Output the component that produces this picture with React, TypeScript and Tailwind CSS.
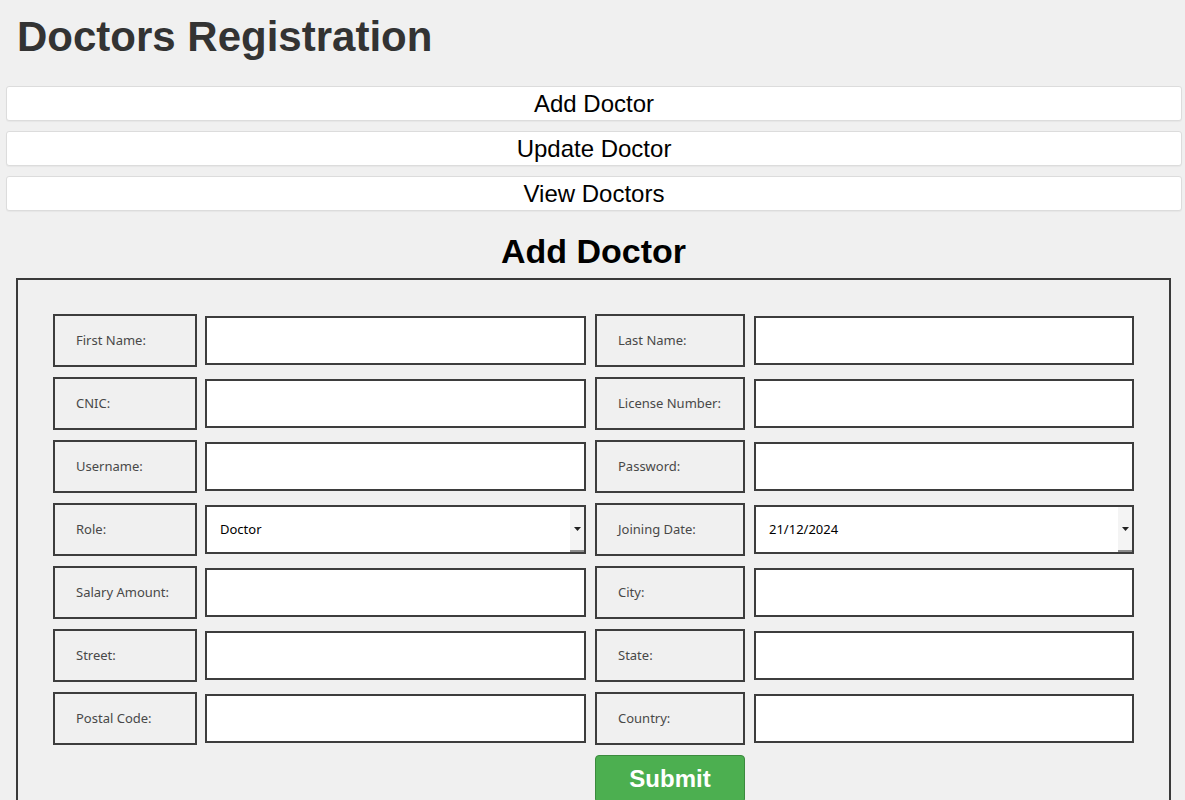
import React from 'react'

const rows: [string, string, string, string][] = [
  ['First Name:', '', 'Last Name:', ''],
  ['CNIC:', '', 'License Number:', ''],
  ['Username:', '', 'Password:', ''],
  ['Role:', 'select:Doctor', 'Joining Date:', 'select:21/12/2024'],
  ['Salary Amount:', '', 'City:', ''],
  ['Street:', '', 'State:', ''],
  ['Postal Code:', '', 'Country:', ''],
]

function Label({ text, width }: { text: string; width: string }) {
  return (
    <div
      className={`${width} h-[53px] flex items-center pl-[21px] border-2 border-[#3d3d3d] bg-[#f0f0f0] text-[13px] text-[#484848] font-['Noto_Sans',sans-serif]`}
    >
      {text}
    </div>
  )
}

function Field({ value, width }: { value: string; width: string }) {
  if (value.startsWith('select:')) {
    const text = value.slice(7)
    return (
      <div className={`${width} h-[49px] flex border-2 border-[#3d3d3d] bg-white`}>
        <div className="flex-1 flex items-center pl-[13px] text-[13px] text-black font-['Noto_Sans',sans-serif]">
          {text}
        </div>
        <div className="w-[14px] flex items-center justify-center bg-[#f4f4f4] border-b-2 border-[#8a8a8a]">
          <svg width="7" height="4" viewBox="0 0 7 4">
            <path d="M0 0h7L3.5 4z" fill="#222" />
          </svg>
        </div>
      </div>
    )
  }
  return <div className={`${width} h-[49px] border-2 border-[#3d3d3d] bg-white`} />
}

export default function App() {
  return (
    <div className="min-h-screen bg-[#f0f0f0] font-['Liberation_Sans',Arial,sans-serif] pb-10">
      <h1 className="pt-[16px] pl-[17px] text-[42px] leading-none font-bold text-[#333]">
        Doctors Registration
      </h1>

      <div className="mt-[28px] ml-[6px] w-[1176px] flex flex-col gap-[10px]">
        {['Add Doctor', 'Update Doctor', 'View Doctors'].map((b) => (
          <button
            key={b}
            className="h-[35px] leading-none bg-white border border-[#dcdcdc] rounded-[3px] text-[24px] text-black shadow-[0_1px_1px_rgba(0,0,0,0.04)]"
          >
            {b}
          </button>
        ))}
      </div>

      <h2 className="mt-[23px] ml-[16px] w-[1155px] text-center text-[34px] leading-none font-bold text-black">
        Add Doctor
      </h2>

      <div className="mt-[10px] ml-[16px] w-[1155px] border-2 border-[#3a3a3a] pt-[34px] pl-[35px] pb-6">
        <div className="flex flex-col gap-[10px]">
          {rows.map(([l1, v1, l2, v2]) => (
            <div key={l1} className="flex items-center">
              <Label text={l1} width="w-[144px]" />
              <div className="ml-[8px]">
                <Field value={v1} width="w-[381px]" />
              </div>
              <div className="ml-[9px]">
                <Label text={l2} width="w-[150px]" />
              </div>
              <div className="ml-[9px]">
                <Field value={v2} width="w-[380px]" />
              </div>
            </div>
          ))}
        </div>
        <div className="mt-[10px] ml-[542px]">
          <button className="w-[150px] h-[48px] bg-[#4caf50] border border-[#3b8a3e] rounded-[4px] text-white text-[24px] font-bold">
            Submit
          </button>
        </div>
      </div>
    </div>
  )
}
